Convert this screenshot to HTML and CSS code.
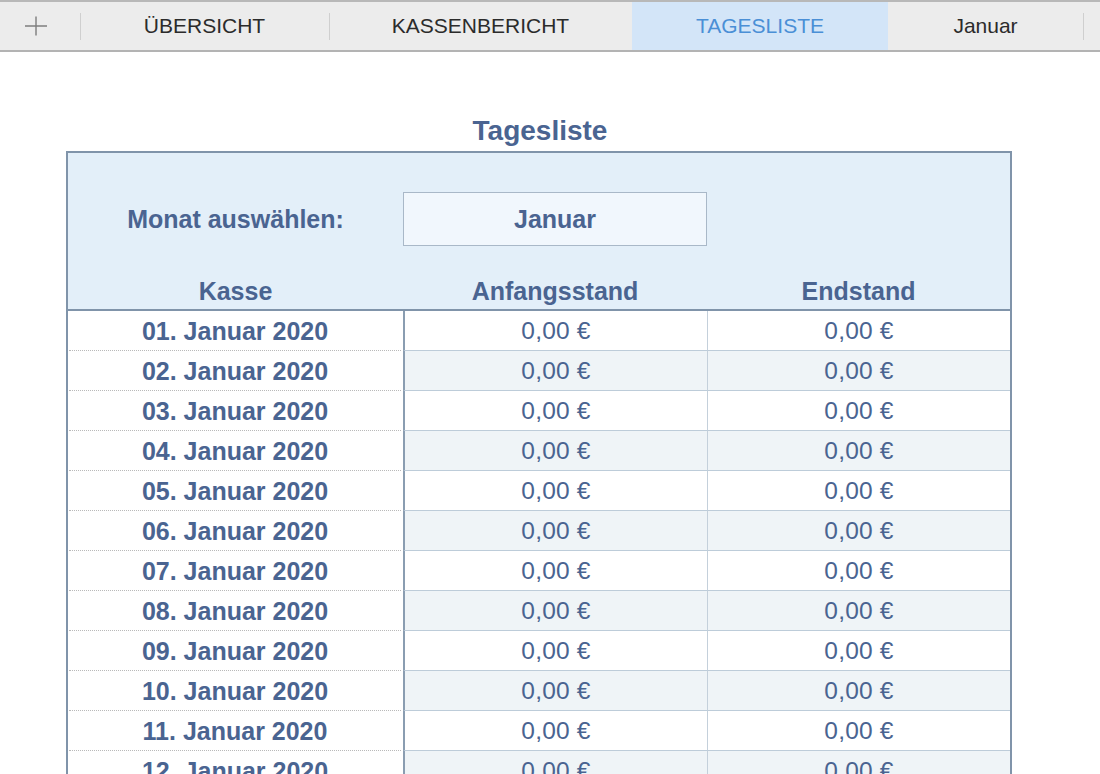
FILE: index.html
```html
<!DOCTYPE html>
<html lang="de">
<head>
<meta charset="utf-8">
<title>Tagesliste</title>
<link rel="stylesheet" href="styles.css">
</head>
<body>
<nav class="tabbar">
  <div class="tab tab-add">
    <svg class="plus" width="24" height="22" viewBox="0 0 24 22"><path d="M12 1.5V20.5M1 11H23" stroke="#7d7d7d" stroke-width="1.4" fill="none"/></svg>
  </div>
  <div class="tab tab-sep w-uber">ÜBERSICHT</div>
  <div class="tab tab-sep w-kasse">KASSENBERICHT</div>
  <div class="tab active w-tages">TAGESLISTE</div>
  <div class="tab w-jan">Januar</div>
  <div class="tab tab-sep tab-rest"></div>
</nav>

<main class="sheet">
  <h1 class="title">Tagesliste</h1>
  <section class="table">
    <div class="head">
      <div class="month-row">
        <div class="month-label">Monat auswählen:</div>
        <div class="month-select">Januar</div>
      </div>
      <div class="col-heads">
        <div class="ch">Kasse</div>
        <div class="ch">Anfangsstand</div>
        <div class="ch">Endstand</div>
      </div>
    </div>
    <div class="rows">
      <div class="row"><div class="c date">01. Januar 2020</div><div class="c val a">0,00 €</div><div class="c val b">0,00 €</div></div>
      <div class="row alt"><div class="c date">02. Januar 2020</div><div class="c val a">0,00 €</div><div class="c val b">0,00 €</div></div>
      <div class="row"><div class="c date">03. Januar 2020</div><div class="c val a">0,00 €</div><div class="c val b">0,00 €</div></div>
      <div class="row alt"><div class="c date">04. Januar 2020</div><div class="c val a">0,00 €</div><div class="c val b">0,00 €</div></div>
      <div class="row"><div class="c date">05. Januar 2020</div><div class="c val a">0,00 €</div><div class="c val b">0,00 €</div></div>
      <div class="row alt"><div class="c date">06. Januar 2020</div><div class="c val a">0,00 €</div><div class="c val b">0,00 €</div></div>
      <div class="row"><div class="c date">07. Januar 2020</div><div class="c val a">0,00 €</div><div class="c val b">0,00 €</div></div>
      <div class="row alt"><div class="c date">08. Januar 2020</div><div class="c val a">0,00 €</div><div class="c val b">0,00 €</div></div>
      <div class="row"><div class="c date">09. Januar 2020</div><div class="c val a">0,00 €</div><div class="c val b">0,00 €</div></div>
      <div class="row alt"><div class="c date">10. Januar 2020</div><div class="c val a">0,00 €</div><div class="c val b">0,00 €</div></div>
      <div class="row"><div class="c date">11. Januar 2020</div><div class="c val a">0,00 €</div><div class="c val b">0,00 €</div></div>
      <div class="row alt"><div class="c date">12. Januar 2020</div><div class="c val a">0,00 €</div><div class="c val b">0,00 €</div></div>
    </div>
  </section>
</main>
</body>
</html>
```

FILE: styles.css
```css
* { box-sizing: border-box; }
html, body {
  margin: 0;
  padding: 0;
  height: 774px;
  overflow: hidden;
  background: #ffffff;
  font-family: "Liberation Sans", Arial, Helvetica, sans-serif;
}

/* ---------- tab bar ---------- */
.tabbar {
  display: flex;
  height: 52px;
  background: #ececec;
  border-top: 2px solid #b8b8b8;
  border-bottom: 2px solid #b3b3b3;
}
.tab {
  height: 48px;
  display: flex;
  align-items: center;
  justify-content: center;
  font-size: 21px;
  color: #2b2b2b;
  position: relative;
  flex: none;
}
.tab-add {
  width: 80px;
  justify-content: flex-start;
  padding-left: 24px;
}
.plus { display: block; margin-top: -1px; }
.tab-sep::before {
  content: "";
  position: absolute;
  left: 0;
  top: 11px;
  height: 27px;
  width: 1px;
  background: #cfcfcf;
}
.w-uber { width: 249px; }
.w-kasse { width: 303px; }
.w-tages { width: 256px; }
.w-jan { width: 195px; }
.tab-rest { flex: 1; }
.tab.active {
  background: #d3e5f8;
  color: #4a8fd6;
}

/* ---------- sheet ---------- */
.sheet {
  padding-top: 61px;
}
.title {
  margin: 0;
  width: 946px;
  margin-left: 67px;
  text-align: center;
  font-size: 28px;
  line-height: 36px;
  font-weight: bold;
  color: #4a6491;
  height: 38px;
}

.table {
  margin-left: 66px;
  width: 946px;
  border-left: 2px solid #8094aa;
  border-right: 2px solid #8094aa;
  border-top: 2px solid #8094aa;
  color: #4a6491;
}

.head {
  background: #e3eff9;
  border-bottom: 2px solid #8094aa;
}
.month-row {
  display: grid;
  grid-template-columns: 335px 304px;
  padding-top: 39px;
  height: 93px;
}
.month-label {
  display: flex;
  align-items: center;
  justify-content: center;
  font-size: 25px;
  font-weight: bold;
}
.month-select {
  height: 54px;
  background: #f1f7fd;
  border: 1.5px solid #a9b8c8;
  display: flex;
  align-items: center;
  justify-content: center;
  font-size: 25px;
  font-weight: bold;
}
.col-heads {
  display: grid;
  grid-template-columns: 335px 304px 303px;
  height: 63px;
  padding-top: 30px;
}
.ch {
  text-align: center;
  font-size: 25px;
  font-weight: bold;
  line-height: 30px;
}

.rows { display: flex; flex-direction: column; }
.row {
  display: grid;
  grid-template-columns: 335px 304px 303px;
  height: 40px;
}
.c {
  display: flex;
  align-items: center;
  justify-content: center;
  font-size: 24.5px;
  height: 40px;
}
.date {
  font-weight: bold;
  background: #ffffff;
  border-bottom: 1px dotted #b9b9b9;
  margin: 0 2px 0 1px;
  font-size: 25px;
  padding-top: 1px;
}
.val {
  background: #ffffff;
  border-bottom: 1.5px solid #bdccd9;
  letter-spacing: 0.2px;
  padding-top: 1px;
}
.val.a { border-left: 2px solid #8a9db1; }
.val.b { border-left: 1.5px solid #c4d0db; }
.row.alt .val { background: #eff4f7; }
```
